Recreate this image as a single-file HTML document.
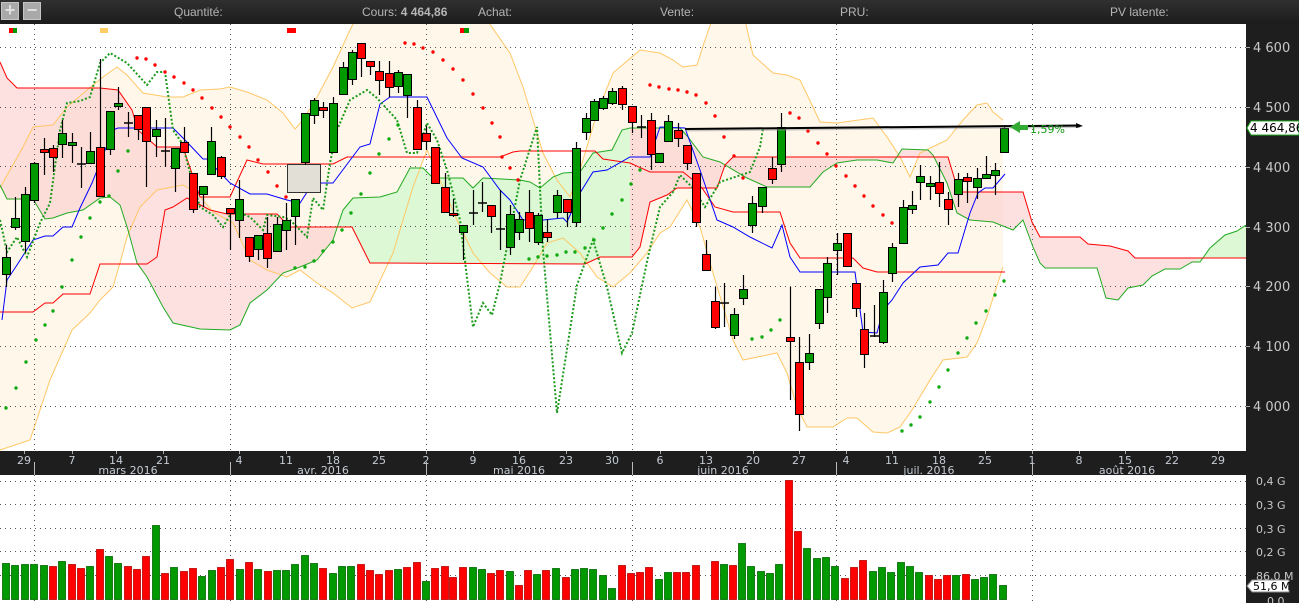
<!DOCTYPE html>
<html><head><meta charset="utf-8"><style>
html,body{margin:0;padding:0;width:1299px;height:603px;overflow:hidden;background:#fff;font-family:"DejaVu Sans","Liberation Sans",sans-serif}
#top{position:absolute;left:0;top:0;width:1299px;height:24px;background:linear-gradient(#303030,#1c1c1c);color:#b4b4b4;font-size:12px;font-family:"Liberation Sans","DejaVu Sans",sans-serif}
#top span{position:absolute;top:5px}
.btn{position:absolute;top:2px;width:18px;height:18px;background:#a9a9a9;border:1px solid #c4c4c4;box-sizing:border-box;color:#e0e0e0;font-size:18px;line-height:15px;text-align:center;font-weight:bold}
svg{position:absolute;left:0;top:0}
</style></head><body>
<div id="top">
<div class="btn" style="left:1px">+</div><div class="btn" style="left:23px">−</div>
<span style="left:174px">Quantité:</span>
<span style="left:362px">Cours: <b>4 464,86</b></span>
<span style="left:478px">Achat:</span>
<span style="left:660px">Vente:</span>
<span style="left:840px">PRU:</span>
<span style="left:1110px">PV latente:</span>
</div>
<svg id="s" width="1299" height="603" viewBox="0 0 1299 603" style="top:0"></svg>
<script>
var o='';
function P(a){return a.map(function(p){return p[0]+','+p[1]}).join(' ')}
o+='<defs><clipPath id="c"><rect x="0" y="24" width="1246" height="427"/></clipPath></defs>';
o+='<g clip-path="url(#c)">';
var bu=[[0,188],[10,170],[23,147],[33,127],[53,125],[67,107],[87,90],[103,77],[117,67],[127,75],[143,93],[167,97],[183,97],[200,90],[220,89],[230,87],[247,92],[267,100],[283,113],[295,129],[303,120],[317,97],[333,67],[350,30],[360,10],[470,10],[487,20],[510,53],[523,87],[533,120],[543,153],[557,180],[570,197],[580,170],[597,113],[613,73],[640,50],[660,53],[673,60],[683,67],[697,65],[705,40],[712,20],[745,20],[753,55],[773,73],[787,75],[800,80],[813,107],[820,122],[837,123],[873,118],[887,137],[900,157],[910,177],[920,153],[947,140],[963,120],[977,105],[987,103],[993,112],[1003,120]];
var bl=[[0,450],[30,440],[50,380],[72,330],[90,313],[100,300],[113,287],[120,263],[127,237],[140,207],[157,190],[183,185],[197,193],[213,212],[233,223],[250,260],[267,270],[287,277],[300,270],[317,283],[333,293],[352,308],[370,302],[393,253],[413,187],[427,150],[440,180],[457,220],[473,253],[490,273],[507,287],[520,287],[533,267],[547,243],[563,238],[580,253],[597,277],[613,287],[630,273],[647,253],[660,233],[670,227],[687,200],[700,227],[713,273],[733,340],[743,360],[777,353],[787,373],[797,407],[807,427],[833,427],[847,418],[857,418],[873,432],[887,433],[900,427],[912,410],[930,380],[943,360],[967,357],[977,343],[987,317],[1003,267]];
o+='<polygon points="'+P(bu.concat(bl.slice().reverse()))+'" fill="#fff7ea"/>';
var A=[[0,185],[7,199],[33,199],[45,219],[53,218],[67,213],[83,210],[100,198],[110,197],[120,205],[128,230],[137,263],[147,277],[163,307],[173,323],[200,329],[230,330],[240,325],[250,303],[267,290],[283,273],[300,267],[317,260],[333,240],[343,210],[353,198],[380,197],[397,192],[410,168],[423,168],[433,178],[463,178],[473,188],[483,178],[520,180],[530,182],[540,188],[553,177],[563,173],[580,172],[593,153],[612,150],[622,130],[630,128],[680,128],[688,137],[703,157],[720,162],[747,178],[767,187],[810,187],[823,172],[837,163],[857,160],[877,160],[893,163],[902,149],[928,150],[933,155],[947,183],[957,213],[970,220],[993,222],[1013,230],[1023,220],[1033,247],[1040,263],[1045,268],[1097,268],[1106,298],[1118,300],[1128,288],[1143,285],[1152,276],[1165,269],[1180,269],[1192,262],[1200,262],[1210,248],[1225,235],[1237,231],[1246,225]];
var LA=[[0,62],[7,78],[17,88],[100,88],[118,90],[132,110],[138,130],[157,147],[183,147],[200,197],[230,197],[247,160],[263,164],[333,164],[347,157],[500,157],[513,152],[520,151],[595,151],[603,159],[630,163],[650,172],[683,172],[693,180],[702,188],[715,207],[733,212],[780,212],[790,243],[800,258],[853,258],[863,268],[877,272],[1005,272]];
var LB=[[0,312],[33,312],[45,303],[53,303],[63,294],[90,294],[100,264],[147,264],[157,257],[165,210],[173,207],[187,198],[210,210],[227,214],[277,214],[290,227],[352,227],[370,263],[585,264],[600,257],[632,257],[640,247],[650,202],[667,195],[677,188],[717,188],[725,165],[733,157],[948,157],[957,187],[963,192],[1023,192],[1032,222],[1040,237],[1080,237],[1088,244],[1110,246],[1128,251],[1135,258],[1246,258]];
var SB=LA.filter(function(p){return p[0]<=200}).concat(LB.filter(function(p){return p[0]>=210}));
var cl=P(A.concat(SB.slice().reverse()));
o+='<clipPath id="g1"><rect x="335" y="0" width="295" height="603"/><rect x="1196" y="0" width="60" height="603"/></clipPath>';
o+='<polygon points="'+cl+'" fill="#fcc8c8" opacity="0.55"/>';
o+='<polygon points="'+cl+'" fill="#dcf8d4" clip-path="url(#g1)"/>';
o+='</g>';
var g='';
[47,107,166,226,286,346,406].forEach(function(y){g+='<line x1="0" y1="'+y+'.5" x2="1246" y2="'+y+'.5" stroke="#555" stroke-dasharray="1,4"/>'});
[481,504,528,551,575].forEach(function(y){g+='<line x1="0" y1="'+y+'.5" x2="1246" y2="'+y+'.5" stroke="#555" stroke-dasharray="1,4"/>'});
[34,230,426,632,836,1032].forEach(function(x){g+='<line x1="'+x+'.5" y1="24" x2="'+x+'.5" y2="451" stroke="#555" stroke-dasharray="1,4"/><line x1="'+x+'.5" y1="475" x2="'+x+'.5" y2="603" stroke="#555" stroke-dasharray="1,4"/>'});
o+=g;
o+='<g clip-path="url(#c)" fill="none">';
o+='<polyline points="'+P(bu)+'" stroke="#ffc766" stroke-width="1"/>';
o+='<polyline points="'+P(bl)+'" stroke="#ffc766" stroke-width="1"/>';
o+='<polyline points="'+P(A)+'" stroke="#22aa22" stroke-width="1"/>';
o+='<polyline points="'+P(LA)+'" stroke="#ff0000" stroke-width="1"/>';
o+='<polyline points="'+P(LB)+'" stroke="#ff0000" stroke-width="1"/>';
var T=[[2,320],[7,280],[17,265],[33,240],[45,236],[53,236],[63,227],[72,227],[80,208],[92,183],[100,163],[113,130],[118,128],[173,128],[185,140],[203,159],[207,159],[230,183],[250,194],[267,194],[287,200],[300,203],[313,183],[333,183],[345,167],[360,147],[370,144],[380,104],[390,97],[427,97],[447,138],[462,158],[483,167],[500,190],[510,200],[523,220],[543,220],[563,218],[567,222],[580,193],[593,172],[607,170],[630,157],[650,157],[660,127],[685,128],[700,170],[717,220],[733,227],[750,237],[772,248],[782,225],[790,257],[800,272],[855,272],[863,332],[877,333],[883,310],[892,300],[903,283],[920,267],[938,265],[948,253],[958,253],[970,213],[978,193],[985,188],[993,188],[1005,174]];
o+='<polyline points="'+P(T)+'" stroke="#0000ff" stroke-width="1"/>';
var CH=[[0,220],[7,252],[17,237],[27,257],[40,223],[50,203],[60,130],[67,103],[80,101],[90,97],[100,63],[110,53],[127,63],[147,85],[157,72],[165,72],[173,130],[182,143],[193,183],[200,207],[213,215],[223,227],[233,210],[250,217],[263,230],[267,215],[283,217],[290,220],[300,230],[307,237],[313,198],[323,210],[330,163],[337,130],[350,100],[367,90],[377,98],[397,120],[407,153],[417,153],[427,123],[437,140],[447,170],[460,220],[473,327],[483,303],[492,315],[500,283],[520,180],[537,127],[543,250],[557,413],[577,285],[593,240],[607,287],[622,353],[632,333],[648,257],[660,207],[673,192],[680,175],[692,187],[705,207],[720,182],[750,172],[760,147],[763,128]];
o+='<polyline points="'+P(CH)+'" stroke="#1a9a1a" stroke-width="2" stroke-dasharray="2,2"/>';
o+='</g>';
var red=[[137,58],[146,59],[155,65],[165,72],[174,77],[184,83],[193,90],[202,98],[212,108],[221,117],[230,127],[240,137],[249,147],[258,160],[268,172],[277,186],[286,197],[405,43],[414,44],[423,48],[433,52],[443,60],[453,69],[463,80],[473,94],[483,108],[492,123],[500,137],[502,157],[510,168],[518,180],[650,85],[659,87],[669,89],[678,90],[687,92],[696,95],[706,103],[715,116],[724,137],[734,156],[743,178],[790,113],[799,118],[808,131],[818,143],[827,154],[836,166],[846,176],[855,186],[864,196],[873,206],[883,215],[892,223]];
var grn=[[6,408],[16,388],[26,362],[36,340],[45,325],[53,311],[62,287],[72,260],[81,237],[90,218],[100,202],[109,196],[118,171],[128,151],[295,268],[305,267],[314,261],[323,251],[333,242],[342,230],[351,213],[361,194],[370,173],[379,154],[389,139],[398,125],[529,259],[538,257],[547,256],[557,255],[566,252],[575,252],[585,248],[594,240],[603,228],[612,214],[622,200],[631,184],[640,170],[752,339],[762,337],[771,330],[780,320],[902,431],[911,425],[920,417],[930,402],[939,387],[948,370],[958,353],[967,338],[976,323],[986,311],[995,295],[1004,281]];
red.forEach(function(p){o+='<circle cx="'+p[0]+'" cy="'+p[1]+'" r="1.7" fill="#ff0000"/>'});
grn.forEach(function(p){o+='<circle cx="'+p[0]+'" cy="'+p[1]+'" r="1.7" fill="#11aa11"/>'});
o+='<rect x="287.5" y="164.5" width="33" height="28" fill="#e2dfd6" stroke="#333"/>';
var C=[[6,257,274,245,287,'g'],[15,218,227,197,230,'g'],[25,194,241,187,253,'g'],[34,163,200,162,203,'g'],[44,149,152,138,175,'r'],[53,148,157,145,172,'r'],[62,133,144,120,158,'g'],[72,142,145,133,163,'g'],[81,164,164,147,188,'d'],[90,151,163,132,163,'g'],[100,147,196,59,196,'r'],[110,111,149,111,155,'g'],[118,103,106,87,110,'g'],[128,123,123,112,137,'d'],[138,115,129,115,140,'r'],[146,107,141,107,187,'r'],[156,129,136,120,157,'g'],[165,151,151,118,167,'d'],[175,148,168,148,192,'g'],[184,142,152,127,152,'r'],[193,173,209,173,213,'r'],[203,186,194,186,207,'g'],[211,141,174,127,174,'g'],[221,157,176,156,179,'r'],[230,208,213,208,250,'r'],[239,199,220,180,238,'g'],[249,237,256,237,262,'r'],[258,235,249,235,260,'g'],[267,233,258,217,268,'r'],[277,224,251,217,251,'g'],[286,220,230,203,250,'g'],[295,199,216,199,245,'g'],[305,113,162,113,165,'g'],[314,100,115,98,124,'g'],[323,107,110,102,118,'r'],[333,103,152,97,152,'g'],[343,67,94,62,94,'g'],[352,52,79,50,85,'g'],[361,43,58,43,77,'r'],[370,61,66,61,75,'r'],[379,71,80,61,95,'r'],[389,73,87,61,97,'r'],[398,72,86,70,93,'g'],[407,74,95,74,118,'g'],[417,107,149,100,149,'r'],[426,133,141,126,150,'r'],[435,147,183,147,183,'r'],[445,187,212,173,212,'r'],[453,213,215,199,217,'r'],[463,225,232,225,260,'g'],[473,213,213,190,225,'d'],[482,203,203,182,212,'d'],[491,205,216,205,233,'r'],[500,229,229,190,250,'d'],[510,214,247,205,255,'g'],[519,219,232,212,240,'g'],[529,212,228,190,242,'r'],[538,215,242,213,245,'g'],[547,232,237,219,242,'r'],[557,195,212,190,218,'g'],[567,199,212,199,227,'r'],[576,148,222,142,227,'g'],[586,118,132,113,140,'g'],[594,101,120,99,120,'g'],[603,98,108,96,110,'g'],[612,91,103,88,105,'g'],[622,88,104,86,110,'r'],[632,106,122,106,133,'r'],[641,127,127,115,138,'d'],[651,120,154,113,170,'r'],[659,153,162,153,162,'g'],[668,121,141,115,141,'g'],[678,130,138,123,147,'r'],[687,145,163,145,170,'r'],[696,173,222,173,227,'r'],[706,254,270,240,270,'r'],[715,301,327,287,329,'r'],[724,303,303,283,327,'d'],[734,314,335,308,339,'g'],[743,289,298,275,305,'g'],[752,203,225,196,233,'g'],[762,187,206,187,213,'g'],[772,168,179,157,184,'r'],[781,127,164,113,172,'g'],[790,337,341,287,400,'r'],[799,362,414,337,431,'r'],[809,353,362,334,370,'g'],[819,289,323,289,329,'g'],[827,263,297,257,313,'g'],[837,243,250,233,275,'g'],[847,233,266,233,267,'r'],[856,283,308,283,317,'r'],[864,329,354,313,368,'r'],[874,336,336,305,337,'d'],[883,292,342,280,344,'g'],[892,247,273,243,282,'g'],[903,207,243,200,243,'g'],[912,205,209,191,214,'g'],[920,176,182,165,200,'g'],[930,183,186,176,200,'g'],[939,182,193,162,207,'r'],[948,199,209,192,225,'r'],[958,179,194,173,207,'g'],[967,177,181,173,203,'r'],[977,178,187,168,199,'g'],[986,174,178,156,178,'g'],[995,170,175,163,195,'g'],[1004,128,152,125,152,'g']];
C.forEach(function(c){
 o+='<line x1="'+(c[0]+.5)+'" y1="'+c[3]+'" x2="'+(c[0]+.5)+'" y2="'+c[4]+'" stroke="#000" stroke-width="1.2"/>';
 if(c[5]=='d'){o+='<line x1="'+(c[0]-4)+'" y1="'+c[1]+'" x2="'+(c[0]+5)+'" y2="'+c[1]+'" stroke="#000" stroke-width="1.5"/>';}
 else{var h=Math.max(2,c[2]-c[1]);o+='<rect x="'+(c[0]-3.5)+'" y="'+c[1]+'.5" width="8" height="'+h+'" fill="'+(c[5]=='g'?'#009900':'#ff0000')+'" stroke="#000" stroke-width="1"/>';}
});
o+='<line x1="685" y1="130" x2="1080" y2="126.5" stroke="#999" stroke-width="3" opacity="0.5"/><line x1="685" y1="129" x2="1080" y2="125.5" stroke="#000" stroke-width="2"/><polygon points="1076,123 1083,126 1076,128" fill="#000"/>';
o+='<polygon points="1010,127 1020,121 1020,125 1028,125 1028,130 1020,130 1020,133" fill="#33aa33"/>';
o+='<text x="1030" y="133" font-size="11" fill="#119911" font-family="DejaVu Sans,sans-serif">1,59%</text>';
o+='<rect x="9" y="28" width="4" height="5" fill="#f00"/><rect x="13" y="28" width="4" height="5" fill="#090"/><rect x="100" y="28" width="8" height="5" fill="#ffcc66"/><rect x="287" y="28" width="9" height="5" fill="#f00"/><rect x="460" y="28" width="4" height="5" fill="#f00"/><rect x="464" y="28" width="5" height="5" fill="#090"/>';
o+='<rect x="1246" y="24" width="53" height="579" fill="#1e1e1e"/>';
var pl=[[47,'4 600'],[107,'4 500'],[167,'4 400'],[227,'4 300'],[286,'4 200'],[346,'4 100'],[406,'4 000']];
pl.forEach(function(p){o+='<line x1="1246" y1="'+p[0]+'.5" x2="1250" y2="'+p[0]+'.5" stroke="#aaa"/><text x="1253" y="'+(p[0]+5)+'" font-size="13" fill="#c8c8c8">'+p[1]+'</text>'});
o+='<polygon points="1247,128 1251,121 1299,121 1299,135 1251,135" fill="#fff" stroke="#22aa22"/><text x="1250" y="132" font-size="12" fill="#000">4 464,86</text>';
o+='<rect x="0" y="451" width="1246" height="24" fill="#1e1e1e"/>';
var dl=[[24,'29'],[72,'7'],[116,'14'],[163,'21'],[239,'4'],[286,'11'],[333,'18'],[379,'25'],[426,'2'],[473,'9'],[519,'16'],[566,'23'],[612,'30'],[660,'6'],[706,'13'],[753,'20'],[799,'27'],[846,'4'],[892,'11'],[939,'18'],[985,'25'],[1032,'1'],[1079,'8'],[1125,'15'],[1172,'22'],[1218,'29']];
dl.forEach(function(d){o+='<line x1="'+d[0]+'.5" y1="451" x2="'+d[0]+'.5" y2="454" stroke="#aaa"/><text x="'+d[0]+'" y="464" font-size="11" fill="#c6ccd4" text-anchor="middle">'+d[1]+'</text>'});
[[128,'mars 2016'],[323,'avr. 2016'],[519,'mai 2016'],[723,'juin 2016'],[929,'juil. 2016'],[1127,'août 2016']].forEach(function(m){o+='<text x="'+m[0]+'" y="474" font-size="11" fill="#c6ccd4" text-anchor="middle">'+m[1]+'</text>'});
[34,230,426,632,836,1032].forEach(function(x){o+='<line x1="'+x+'.5" y1="462" x2="'+x+'.5" y2="475" stroke="#bbb"/>'});
var V=[[6,563,'g'],[15,565,'g'],[25,564,'g'],[34,564,'g'],[44,565,'g'],[53,566,'r'],[62,561,'g'],[72,564,'r'],[81,568,'r'],[90,566,'g'],[100,549,'r'],[109,556,'g'],[118,563,'g'],[128,566,'r'],[137,569,'r'],[146,556,'r'],[156,525,'g'],[165,573,'r'],[174,567,'g'],[184,571,'r'],[193,568,'r'],[202,576,'g'],[212,570,'g'],[221,567,'r'],[230,559,'r'],[240,569,'g'],[249,562,'r'],[258,569,'g'],[268,571,'r'],[277,570,'g'],[286,570,'g'],[295,564,'g'],[305,555,'g'],[314,563,'g'],[323,568,'r'],[333,573,'g'],[342,566,'g'],[351,566,'g'],[361,564,'r'],[370,570,'r'],[379,574,'r'],[389,570,'r'],[398,569,'g'],[407,567,'r'],[417,562,'r'],[426,581,'g'],[435,568,'r'],[445,566,'r'],[453,577,'r'],[463,567,'r'],[473,567,'g'],[482,569,'g'],[491,573,'r'],[500,570,'r'],[510,571,'g'],[519,585,'r'],[528,570,'r'],[537,574,'g'],[546,570,'r'],[556,568,'g'],[566,577,'r'],[575,569,'g'],[584,568,'g'],[593,569,'g'],[603,575,'g'],[612,588,'g'],[622,565,'r'],[631,573,'r'],[640,572,'r'],[649,567,'r'],[659,579,'g'],[668,572,'g'],[677,572,'r'],[686,572,'r'],[696,565,'r'],[715,561,'r'],[724,564,'g'],[733,565,'r'],[742,543,'g'],[751,566,'g'],[761,571,'g'],[770,573,'g'],[779,564,'g'],[789,480,'r'],[798,531,'r'],[807,548,'g'],[817,558,'g'],[826,557,'g'],[835,566,'g'],[845,578,'r'],[854,567,'r'],[863,560,'r'],[873,571,'g'],[882,567,'g'],[891,572,'g'],[901,562,'g'],[910,566,'g'],[919,572,'g'],[929,575,'r'],[938,579,'r'],[947,575,'r'],[956,575,'g'],[966,574,'r'],[975,579,'g'],[984,577,'g'],[993,574,'g'],[1003,585,'g']];
V.forEach(function(v){o+='<rect x="'+(v[0]-3.5)+'" y="'+v[1]+'.5" width="7" height="'+(599-v[1])+'" fill="'+(v[2]=='g'?'#009900':'#ff0000')+'" stroke="'+(v[2]=='g'?'#006600':'#bb0000')+'" stroke-width="0.8"/>'});
[[481,'0,4 G'],[505,'0,3 G'],[529,'0,3 G'],[552,'0,2 G'],[576,'86,0 M'],[601,'0,0']].forEach(function(p){o+='<text x="'+(p[1]=='0,0'?1267:1256)+'" y="'+(p[0]+4)+'" font-size="11" fill="#c8c8c8">'+p[1]+'</text>'});
o+='<polygon points="1247,586 1252,580 1289,580 1289,592 1252,592" fill="#fff" stroke="#888"/><text x="1253" y="590" font-size="11" fill="#000">51,6 M</text>';
document.getElementById('s').innerHTML=o;
</script>
</body></html>
